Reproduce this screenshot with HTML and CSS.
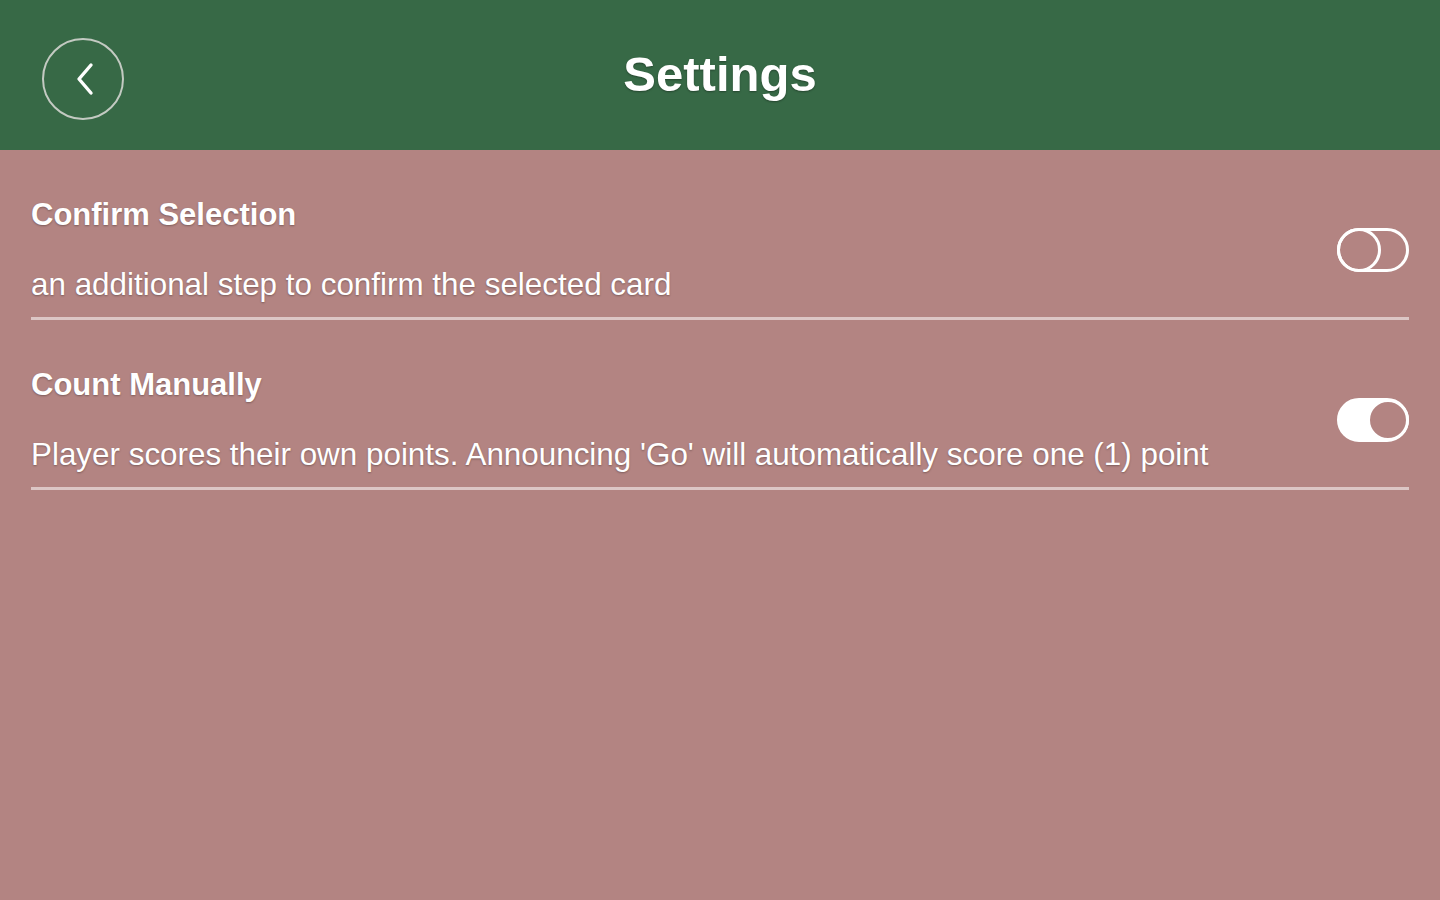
FILE: index.html
```html
<!DOCTYPE html>
<html lang="en">
<head>
<meta charset="utf-8">
<title>Settings</title>
<link rel="stylesheet" href="styles.css">
</head>
<body>
<header class="topbar">
  <button class="back" aria-label="Back">
    <svg width="30" height="36" viewBox="0 0 30 36"><path d="M21 4 L9 18 L21 32" fill="none" stroke="#fff" stroke-width="3.4" stroke-linecap="round" stroke-linejoin="round"/></svg>
  </button>
  <h1 class="title">Settings</h1>
  <div class="spacer"></div>
</header>
<main class="list">
  <div class="row">
    <div class="text">
      <div class="label">Confirm Selection</div>
      <div class="desc">an additional step to confirm the selected card</div>
    </div>
    <div class="toggle off"><span class="knob"></span></div>
  </div>
  <div class="row">
    <div class="text">
      <div class="label">Count Manually</div>
      <div class="desc">Player scores their own points. Announcing 'Go' will automatically score one (1) point</div>
    </div>
    <div class="toggle on"><span class="knob"></span></div>
  </div>
</main>
</body>
</html>
```
FILE: styles.css
```css
html, body {
  margin: 0;
  padding: 0;
  height: 100%;
}
body {
  background: #b38482;
  font-family: "Liberation Sans", Arial, sans-serif;
  color: #fff;
}
.topbar {
  height: 150px;
  background: #376946;
  display: flex;
  align-items: center;
  padding: 0 42px;
  box-sizing: border-box;
}
.back {
  width: 82px;
  height: 82px;
  border-radius: 50%;
  border: 2px solid #c3cac2;
  background: transparent;
  display: flex;
  align-items: center;
  justify-content: center;
  padding: 0 0 0 4px;
  margin-top: 8px;
  box-sizing: border-box;
  cursor: pointer;
}
.spacer {
  width: 82px;
}
.title {
  flex: 1;
  margin: 0;
  text-align: center;
  font-size: 49px;
  font-weight: bold;
  line-height: 56px;
  margin-bottom: 2px;
  text-shadow: 0 1px 2px rgba(0, 0, 0, 0.35);
}
.list {
  padding: 0 31px;
}
.row {
  display: flex;
  align-items: center;
  padding: 47px 0 14px;
  border-bottom: 3px solid #dcc6c5;
}
.text {
  flex: 1;
  display: flex;
  flex-direction: column;
  gap: 34px;
}
.label {
  font-size: 31px;
  font-weight: bold;
  line-height: 36px;
  text-shadow: 0 1px 2px rgba(0, 0, 0, 0.3);
}
.desc {
  font-size: 31.4px;
  line-height: 36px;
  text-shadow: 0 1px 2px rgba(0, 0, 0, 0.3);
}
.toggle {
  width: 72px;
  height: 44px;
  border-radius: 22px;
  border: 3px solid #fff;
  box-sizing: border-box;
  display: flex;
  align-items: center;
}
.toggle .knob {
  width: 44px;
  height: 44px;
  border-radius: 50%;
  box-sizing: border-box;
  border: 3px solid #fff;
  flex-shrink: 0;
}
.toggle.off {
  justify-content: flex-start;
}
.toggle.off .knob {
  margin-left: -3px;
}
.toggle.on {
  background: #fff;
  justify-content: flex-end;
}
.toggle.on .knob {
  width: 42px;
  height: 42px;
  background: #b38482;
  margin-right: -3px;
}
```
